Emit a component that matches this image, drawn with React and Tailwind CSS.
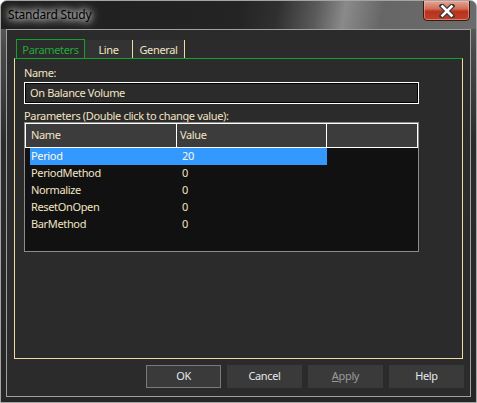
export default function App() {
  const rows = [
    ["Period", "20"],
    ["PeriodMethod", "0"],
    ["Normalize", "0"],
    ["ResetOnOpen", "0"],
    ["BarMethod", "0"],
  ];
  return (
    <div className="w-[477px] h-[403px] flex flex-col rounded-t-[7px] border border-[#a4a4a4] bg-[linear-gradient(180deg,#6a6a6a_0%,#4a4a4a_12%,#2c2c2c_35%,#262626_100%)] font-['Noto_Sans',sans-serif] text-[11px] tracking-[-0.35px] text-[#f2e4c4] overflow-hidden">
      {/* Title bar */}
      <div className="relative h-[28px] shrink-0 flex items-center pl-[7px] bg-[linear-gradient(100deg,#1e1e1e_0%,#242424_50%,#303030_58%,#5a5a5a_66%,#8a8a8a_72%,#666_80%,#6c6c6c_100%)]">
        <span className="text-[12px] tracking-[-0.2px] text-black [text-shadow:0_0_6px_#fff,0_0_10px_#ddd,0_0_14px_#bbb]">Standard Study</span>
        <div className="absolute right-[6px] top-[-1px] w-[47px] h-[21px] rounded-b-[4px] border border-[#3a1a12] bg-[linear-gradient(180deg,#e6a494_0%,#d0705a_40%,#b8321c_55%,#c0402a_100%)] flex items-center justify-center shadow-[inset_0_0_0_1px_rgba(255,200,190,0.45)]">
          <svg width="16" height="14" viewBox="0 0 16 14">
            <path d="M3 2 L13 12 M13 2 L3 12" stroke="#3a3a3a" strokeWidth="5" strokeLinecap="square" />
            <path d="M3.5 2.5 L12.5 11.5 M12.5 2.5 L3.5 11.5" stroke="#fff" strokeWidth="2.6" strokeLinecap="square" />
          </svg>
        </div>
      </div>

      {/* Client area */}
      <div className="mx-[5px] mb-[5px] h-[368px] border border-[#a0a0a0] bg-[#2b2b2b] flex flex-col pt-[9px] px-[7px] pb-[8px]">
        {/* Tabs */}
        <div className="h-[19px] flex items-end pl-[2px]">
          <div className="w-[69px] h-[19px] border-l border-t border-r border-[#14a02c] text-[#22a83c] flex items-center justify-center leading-none">
            Parameters
          </div>
          <div className="w-[48px] h-[18px] bg-[#333333] border-r border-[#f0dca0] flex items-center justify-center leading-none">
            Line
          </div>
          <div className="w-[52px] h-[18px] bg-[#333333] border-r border-[#f0dca0] flex items-center justify-center leading-none">
            General
          </div>
        </div>

        {/* Panel */}
        <div className="h-[301px] border-t border-t-[#14a02c] border-x border-b border-x-[#f0dca0] border-b-[#f0dca0] pl-[9px] pt-[7px] flex flex-col">
          <div className="h-[14px] leading-[14px]">Name:</div>
          <div className="mt-[2px] w-[395px] h-[22px] border border-white shadow-[inset_0_0_0_1px_#000] bg-[#2b2b2b] flex items-center pl-[5px]">
            On Balance Volume
          </div>
          <div className="mt-[5px] h-[13px] leading-[13px]">Parameters (Double click to change value):</div>
          <div className="w-[395px] h-[130px] border border-[#8c8c8c] bg-[#111111] flex flex-col">
            <div className="h-[25px] flex bg-[#3c3c3c] shrink-0">
              <div className="w-[152px] border border-white flex items-center pl-[5px]">Name</div>
              <div className="w-[150px] border-y border-r border-white flex items-center pl-[3px]">Value</div>
              <div className="w-[91px] border-y border-r border-white"></div>
            </div>
            {rows.map(([n, v], i) => (
              <div
                key={n}
                className={
                  "ml-[5px] w-[297px] h-[17px] flex items-center " +
                  (i === 0 ? "bg-[#3399ff] text-[#fff8ec]" : "")
                }
              >
                <span className="w-[151px] pl-[1px]">{n}</span>
                <span className="pl-[1px]">{v}</span>
              </div>
            ))}
          </div>
        </div>

        {/* Buttons */}
        <div className="mt-[6px] -mr-[1px] flex justify-end gap-[6px] text-[#e4e8ee]">
          <button className="w-[75px] h-[23px] bg-[#3a3a3a] border border-[#7a7a7a]">OK</button>
          <button className="w-[75px] h-[23px] bg-[#3a3a3a] border border-[#3a3a3a]">Cancel</button>
          <button className="w-[75px] h-[23px] bg-[#3a3a3a] border border-[#3a3a3a] text-[#9a9a9a]">
            <span className="underline">A</span>pply
          </button>
          <button className="w-[75px] h-[23px] bg-[#3a3a3a] border border-[#3a3a3a]">Help</button>
        </div>
      </div>
    </div>
  );
}
